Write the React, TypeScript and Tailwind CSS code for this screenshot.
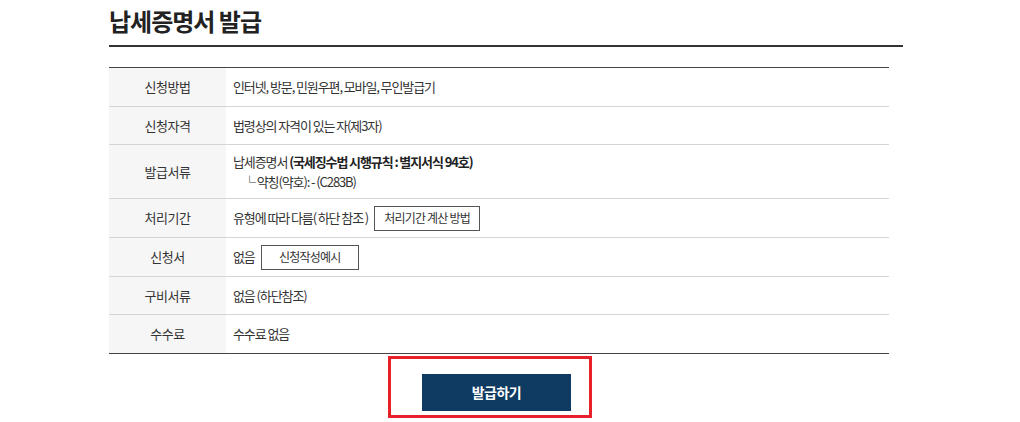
import React from "react";

const font = { fontFamily: '"Noto Sans CJK KR", "Noto Sans", sans-serif' };

type Row = { label: string; h: string; content: React.ReactNode };

const OutlineButton = ({ children, w }: { children: React.ReactNode; w: string }) => (
  <span
    className={`inline-flex h-[25px] items-center justify-center border border-[#555] bg-white text-[12px] tracking-[-0.8px] text-[#333] ${w}`}
  >
    {children}
  </span>
);

const rows: Row[] = [
  { label: "신청방법", h: "h-[38px]", content: "인터넷, 방문, 민원우편, 모바일, 무인발급기" },
  { label: "신청자격", h: "h-[37px]", content: "법령상의 자격이 있는 자(제3자)" },
  {
    label: "발급서류",
    h: "h-[53px]",
    content: (
      <div className="flex flex-col leading-[20px]">
        <span>
          납세증명서 <b className="font-bold text-[#222]">(국세징수법 시행규칙 : 별지서식 94호)</b>
        </span>
        <span className="pl-[10px]">└ 약칭(약호): - (C283B)</span>
      </div>
    ),
  },
  {
    label: "처리기간",
    h: "h-[38px]",
    content: (
      <div className="flex items-center gap-[6px]">
        <span>유형에 따라 다름( 하단 참조 )</span>
        <OutlineButton w="w-[106px]">처리기간 계산 방법</OutlineButton>
      </div>
    ),
  },
  {
    label: "신청서",
    h: "h-[38px]",
    content: (
      <div className="flex items-center gap-[6px]">
        <span>없음</span>
        <OutlineButton w="w-[98px]">신청작성예시</OutlineButton>
      </div>
    ),
  },
  { label: "구비서류", h: "h-[37px]", content: "없음 (하단참조)" },
  { label: "수수료", h: "h-[38px]", content: "수수료 없음" },
];

export default function App() {
  return (
    <div className="h-[422px] w-[1020px] overflow-hidden bg-white" style={font}>
      <div className="ml-[109px] w-[794px]">
        <h1 className="pt-[5px] text-[24px] font-bold leading-[32px] tracking-[-1px] text-[#222]">
          납세증명서 발급
        </h1>
        <div className="mt-[8px] h-[2px] bg-[#333]" />

        <div className="mt-[20px] w-[780px] border-t border-[#444]">
          {rows.map((r, i) => (
            <div
              key={r.label}
              className={`flex ${r.h} box-content border-b ${
                i === rows.length - 1 ? "border-[#444]" : "border-[#d5d5d5]"
              }`}
            >
              <div className="flex w-[117px] shrink-0 items-center justify-center bg-[#f6f6f6] text-[13px] tracking-[-0.5px] text-[#333]">
                {r.label}
              </div>
              <div className="flex flex-1 items-center pl-[7px] text-[13px] tracking-[-1.1px] text-[#333]">
                {r.content}
              </div>
            </div>
          ))}
        </div>

        <div className="ml-[279px] mt-[2px] h-[62px] w-[204px] border-[3px] border-[#e8202a] pl-[31px] pt-[15px]">
          <button className="flex h-[37px] w-[149px] items-center justify-center bg-[#0f3b63] text-[14px] font-bold tracking-[-0.5px] text-white">
            발급하기
          </button>
        </div>
      </div>
    </div>
  );
}
